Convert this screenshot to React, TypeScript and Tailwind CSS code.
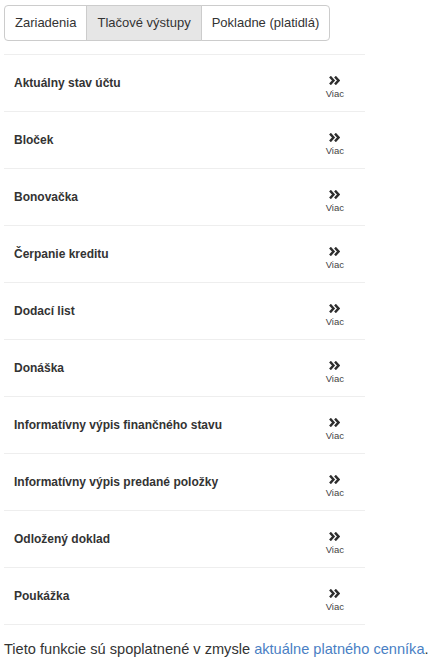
const rows = [
  "Aktuálny stav účtu",
  "Bloček",
  "Bonovačka",
  "Čerpanie kreditu",
  "Dodací list",
  "Donáška",
  "Informatívny výpis finančného stavu",
  "Informatívny výpis predané položky",
  "Odložený doklad",
  "Poukážka",
];

const tabs = ["Zariadenia", "Tlačové výstupy", "Pokladne (platidlá)"];

const Chevrons = () => (
  <svg width="11" height="9" viewBox="0 0 11 9" className="block">
    <path d="M1 0.6 L4.5 4.5 L1 8.4" fill="none" stroke="#2e2e2e" strokeWidth="2.4" />
    <path d="M6 0.6 L9.5 4.5 L6 8.4" fill="none" stroke="#2e2e2e" strokeWidth="2.4" />
  </svg>
);

export default function App() {
  return (
    <div className="min-h-screen bg-white text-[#333] font-['Liberation_Sans',Arial,sans-serif] pt-[5px] pl-[4px]">
      {/* tabs */}
      <div className="flex w-fit">
        {tabs.map((t, i) => (
          <div
            key={t}
            className={`h-[36px] flex items-center px-[10px] text-[13px] border border-[#ccc] ${
              i === 1 ? "bg-[#e6e6e6]" : "bg-white"
            } ${i === 0 ? "rounded-l-[4px]" : "-ml-px"} ${i === 2 ? "rounded-r-[4px]" : ""}`}
          >
            {t}
          </div>
        ))}
      </div>

      {/* list */}
      <div className="w-[361px] mt-[13px] border-t border-[#eee]">
        {rows.map((r) => (
          <div key={r} className="h-[57px] border-b border-[#eee] flex items-center justify-between pl-[10px] pr-[21px]">
            <span className="text-[12px] font-bold">{r}</span>
            <div className="self-stretch flex flex-col items-center pt-[21px]">
              <Chevrons />
              <span className="text-[9.5px] leading-[10px] mt-[4px] text-[#444]">Viac</span>
            </div>
          </div>
        ))}
      </div>

      <p className="text-[14.6px] mt-[14px] leading-[20px]">
        Tieto funkcie sú spoplatnené v zmysle <a className="text-[#4a7fc4]">aktuálne platného cenníka</a>.
      </p>
    </div>
  );
}
